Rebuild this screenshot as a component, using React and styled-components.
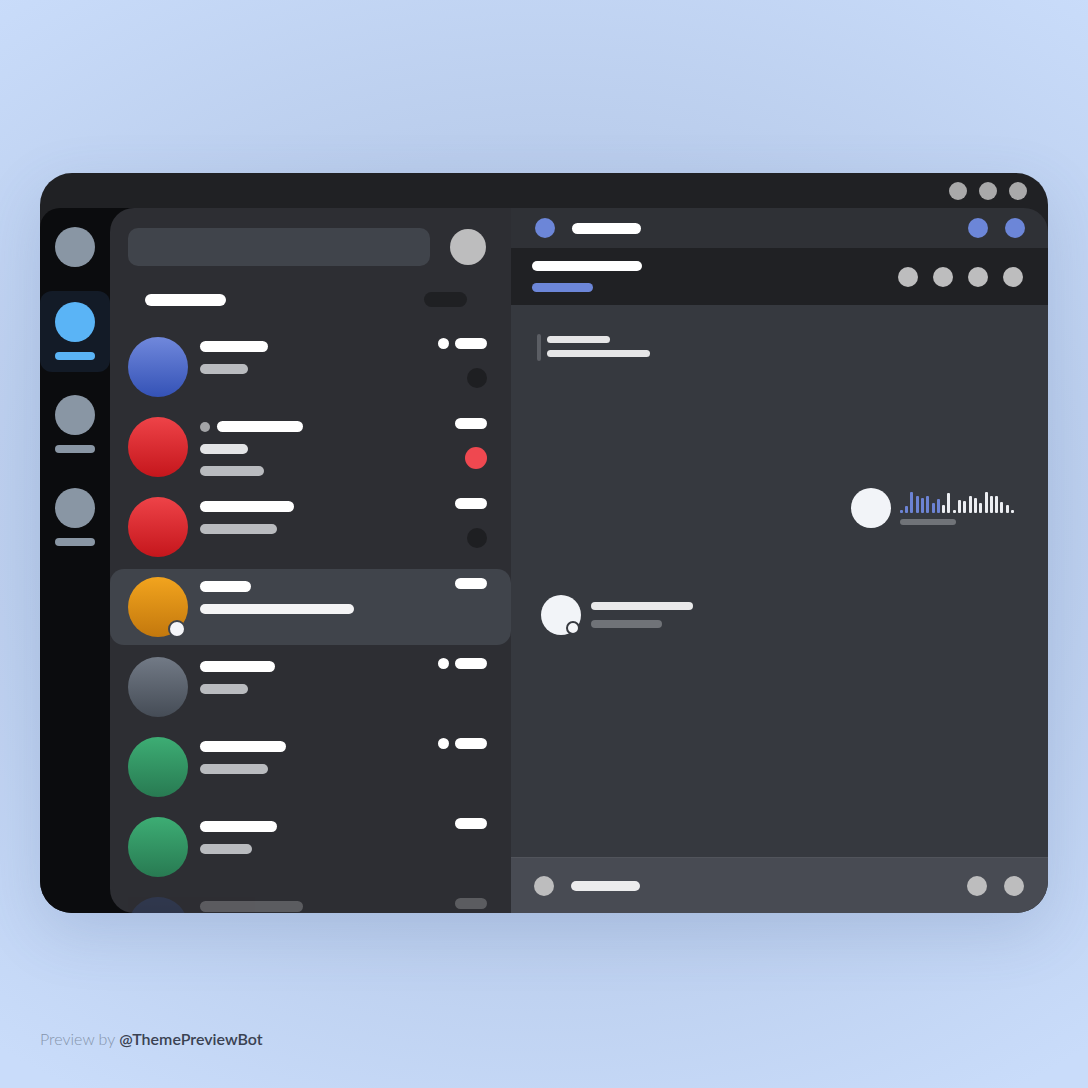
import React from "react";
import styled, { createGlobalStyle } from "styled-components";

const GlobalStyle = createGlobalStyle`
  html, body {
    margin: 0;
    padding: 0;
  }
  body {
    font-family: Lato, "Open Sans", sans-serif;
    background: #c4d8f6;
  }
`;

const Page = styled.div`
  width: 1088px;
  height: 1088px;
  box-sizing: border-box;
  padding: 173px 40px 0;
  overflow: hidden;
  background: radial-gradient(
    ellipse 80% 62% at 50% 48%,
    #b2c4e4 0%,
    #bacdec 55%,
    #c9dcfa 100%
  );
`;

const Window = styled.div`
  height: 740px;
  border-radius: 32px;
  background: #202124;
  overflow: hidden;
  display: flex;
  flex-direction: column;
  box-shadow: 0 20px 60px rgba(70, 100, 150, 0.18);
`;

const TitleBar = styled.div`
  height: 35px;
  flex-shrink: 0;
  display: flex;
  align-items: center;
  justify-content: flex-end;
  gap: 12px;
  padding-right: 21px;
`;

const Dot = styled.span`
  display: block;
  flex-shrink: 0;
  width: ${(p) => p.$size}px;
  height: ${(p) => p.$size}px;
  border-radius: 50%;
  background: ${(p) => p.$color};
`;

const Bar = styled.span`
  display: block;
  flex-shrink: 0;
  width: ${(p) => p.$w}px;
  height: ${(p) => p.$h || 11}px;
  border-radius: 999px;
  background: ${(p) => p.$color || "#ffffff"};
`;

const Body = styled.div`
  flex: 1;
  min-height: 0;
  display: flex;
`;

const Sidebar = styled.div`
  width: 471px;
  flex-shrink: 0;
  display: flex;
  background: #0b0c0e;
  border-top-left-radius: 20px;
`;

const Rail = styled.div`
  width: 70px;
  flex-shrink: 0;
  display: flex;
  flex-direction: column;
  gap: 12px;
  padding-top: 8px;
`;

const RailItem = styled.div`
  display: flex;
  flex-direction: column;
  align-items: center;
  gap: 10px;
  padding: 11px 0 12px;
  border-radius: 12px;
  background: ${(p) => (p.$active ? "#131b27" : "transparent")};
`;

const ListPanel = styled.div`
  width: 401px;
  flex-shrink: 0;
  display: flex;
  flex-direction: column;
  background: #2d2e33;
  border-radius: 24px 0 0 24px;
  overflow: hidden;
`;

const SearchRow = styled.div`
  display: flex;
  align-items: center;
  gap: 20px;
  padding: 20px 25px 0 18px;
`;

const SearchBox = styled.div`
  flex: 1;
  height: 38px;
  border-radius: 10px;
  background: #40444b;
`;

const ListHeader = styled.div`
  height: 16px;
  margin-top: 26px;
  display: flex;
  align-items: center;
  justify-content: space-between;
  padding: 0 44px 0 35px;
`;

const Rows = styled.div`
  margin-top: 20px;
  display: flex;
  flex-direction: column;
`;

const Row = styled.div`
  height: 76px;
  margin: 2px 0;
  box-sizing: border-box;
  flex-shrink: 0;
  display: flex;
  align-items: flex-start;
  padding: 8px 24px 0 18px;
  border-radius: 14px;
  background: ${(p) => (p.$active ? "#40444b" : "transparent")};
  opacity: ${(p) => (p.$faded ? 0.22 : 1)};
`;

const Avatar = styled.div`
  position: relative;
  width: 60px;
  height: 60px;
  flex-shrink: 0;
  border-radius: 50%;
  background: linear-gradient(180deg, ${(p) => p.$from}, ${(p) => p.$to});
`;

const Status = styled.span`
  position: absolute;
  left: ${(p) => p.$left}px;
  top: ${(p) => p.$top}px;
  width: ${(p) => p.$size}px;
  height: ${(p) => p.$size}px;
  border-radius: 50%;
  background: #f4f5f8;
  border: 2px solid ${(p) => p.$ring};
`;

const TextCol = styled.div`
  margin-left: 12px;
  padding-top: 4px;
  display: flex;
  flex-direction: column;
  gap: 12px;
`;

const TitleLine = styled.div`
  display: flex;
  align-items: center;
  gap: 7px;
`;

const MetaCol = styled.div`
  margin-left: auto;
  padding-top: 1px;
  display: flex;
  flex-direction: column;
  align-items: flex-end;
`;

const MetaTop = styled.div`
  display: flex;
  align-items: center;
  gap: 6px;
`;

const BadgeSlot = styled.div`
  height: 24px;
  margin-top: 17px;
  display: flex;
  align-items: center;
`;

const ChatSide = styled.div`
  flex: 1;
  min-width: 0;
  display: flex;
  flex-direction: column;
  border-top-right-radius: 24px;
  overflow: hidden;
`;

const TopBar = styled.div`
  height: 40px;
  flex-shrink: 0;
  display: flex;
  align-items: center;
  gap: 17px;
  padding: 0 23px 0 24px;
  background: #2f3136;
`;

const Group = styled.div`
  margin-left: auto;
  display: flex;
  align-items: center;
  gap: ${(p) => p.$gap}px;
`;

const ChatHeader = styled.div`
  height: 57px;
  flex-shrink: 0;
  box-sizing: border-box;
  display: flex;
  align-items: center;
  padding: 0 25px 0 21px;
  background: #202124;
`;

const HeaderTitles = styled.div`
  display: flex;
  flex-direction: column;
  gap: 12px;
`;

const Messages = styled.div`
  flex: 1;
  display: flex;
  flex-direction: column;
  padding: 29px 34px 0 26px;
  background: #36393f;
`;

const Quote = styled.div`
  display: flex;
  gap: 6px;
`;

const QuoteMark = styled.span`
  width: 4px;
  height: 27px;
  border-radius: 2px;
  background: #5b5e64;
`;

const QuoteLines = styled.div`
  padding-top: 2px;
  display: flex;
  flex-direction: column;
  gap: 7px;
`;

const Voice = styled.div`
  align-self: flex-end;
  margin-top: 127px;
  display: flex;
  align-items: center;
  gap: 9px;
`;

const VoiceBody = styled.div`
  display: flex;
  flex-direction: column;
  gap: 6px;
`;

const Wave = styled.div`
  height: 21px;
  display: flex;
  align-items: flex-end;
  gap: 2.3px;
`;

const WaveBar = styled.span`
  width: 3px;
  height: ${(p) => p.$h}px;
  border-radius: 1px;
  background: ${(p) => (p.$played ? "#6c83d4" : "#eceef2")};
`;

const Incoming = styled.div`
  margin: 67px 0 0 4px;
  display: flex;
  align-items: center;
  gap: 10px;
`;

const Bubble = styled.div`
  position: relative;
  width: 40px;
  height: 40px;
  border-radius: 50%;
  background: #f2f4f8;
`;

const IncomingLines = styled.div`
  display: flex;
  flex-direction: column;
  gap: 10px;
`;

const Composer = styled.div`
  height: 56px;
  flex-shrink: 0;
  box-sizing: border-box;
  display: flex;
  align-items: center;
  gap: 17px;
  padding: 0 24px 0 23px;
  background: #484b53;
  border-top: 1px solid #51545b;
`;

const Footer = styled.div`
  margin-top: 116px;
  font-size: 16px;
  line-height: 20px;
  color: #8594ab;
  font-weight: 300;
`;

const Handle = styled.span`
  color: #3a4252;
  font-weight: 600;
`;

const chats = [
  {
    from: "#7088dc",
    to: "#3452b6",
    title: 68,
    lines: [{ w: 48, c: "#b9bbbf" }],
    dot: true,
    badge: "#1e1f22",
    badgeSize: 20,
  },
  {
    from: "#ee4348",
    to: "#c5161c",
    title: 86,
    muted: true,
    lines: [
      { w: 48, c: "#e3e4e6" },
      { w: 64, c: "#b9bbbf" },
    ],
    badge: "#ef4850",
    badgeSize: 22,
  },
  {
    from: "#ee4348",
    to: "#c5161c",
    title: 94,
    lines: [{ w: 77, c: "#b9bbbf" }],
    badge: "#1e1f22",
    badgeSize: 20,
  },
  {
    from: "#f2a41e",
    to: "#c3780d",
    title: 51,
    lines: [{ w: 154, c: "#f4f4f5" }],
    active: true,
    online: true,
  },
  {
    from: "#727a86",
    to: "#454c56",
    title: 75,
    lines: [{ w: 48, c: "#b9bbbf" }],
    dot: true,
  },
  {
    from: "#3dad74",
    to: "#287a52",
    title: 86,
    lines: [{ w: 68, c: "#b9bbbf" }],
    dot: true,
  },
  {
    from: "#3dad74",
    to: "#287a52",
    title: 77,
    lines: [{ w: 52, c: "#b9bbbf" }],
  },
  {
    from: "#3a5fb0",
    to: "#20386e",
    title: 103,
    lines: [{ w: 60, c: "#b9bbbf" }],
    faded: true,
  },
];

const wave = [3, 7, 21, 17, 15, 17, 10, 14, 8, 20, 3, 13, 12, 17, 15, 10, 21, 17, 17, 11, 8, 3];

function ChatRow({ chat }) {
  return (
    <Row $active={chat.active} $faded={chat.faded}>
      <Avatar $from={chat.from} $to={chat.to}>
        {chat.online && <Status $left={40} $top={43} $size={14} $ring="#40444b" />}
      </Avatar>
      <TextCol>
        <TitleLine>
          {chat.muted && <Dot $size={10} $color="#a3a4a7" />}
          <Bar $w={chat.title} />
        </TitleLine>
        {chat.lines.map((l, i) => (
          <Bar key={i} $w={l.w} $h={10} $color={l.c} />
        ))}
      </TextCol>
      <MetaCol>
        <MetaTop>
          {chat.dot && <Dot $size={11} $color="#ffffff" />}
          <Bar $w={32} />
        </MetaTop>
        {chat.badge && (
          <BadgeSlot>
            <Dot $size={chat.badgeSize} $color={chat.badge} />
          </BadgeSlot>
        )}
      </MetaCol>
    </Row>
  );
}

export default function App() {
  return (
    <Page>
      <GlobalStyle />
      <Window>
        <TitleBar>
          <Dot $size={18} $color="#a9a9aa" />
          <Dot $size={18} $color="#a9a9aa" />
          <Dot $size={18} $color="#a9a9aa" />
        </TitleBar>
        <Body>
          <Sidebar>
            <Rail>
              <RailItem>
                <Dot $size={40} $color="#8996a4" />
              </RailItem>
              <RailItem $active>
                <Dot $size={40} $color="#5ab4f6" />
                <Bar $w={40} $h={8} $color="#5ab4f6" />
              </RailItem>
              <RailItem>
                <Dot $size={40} $color="#8996a4" />
                <Bar $w={40} $h={8} $color="#8996a4" />
              </RailItem>
              <RailItem>
                <Dot $size={40} $color="#8996a4" />
                <Bar $w={40} $h={8} $color="#8996a4" />
              </RailItem>
            </Rail>
            <ListPanel>
              <SearchRow>
                <SearchBox />
                <Dot $size={36} $color="#bdbdbe" />
              </SearchRow>
              <ListHeader>
                <Bar $w={81} $h={12} />
                <Bar $w={43} $h={15} $color="#1f2023" />
              </ListHeader>
              <Rows>
                {chats.map((c, i) => (
                  <ChatRow key={i} chat={c} />
                ))}
              </Rows>
            </ListPanel>
          </Sidebar>
          <ChatSide>
            <TopBar>
              <Dot $size={20} $color="#6c86d8" />
              <Bar $w={69} $h={11} />
              <Group $gap={17}>
                <Dot $size={20} $color="#6c86d8" />
                <Dot $size={20} $color="#6c86d8" />
              </Group>
            </TopBar>
            <ChatHeader>
              <HeaderTitles>
                <Bar $w={110} $h={10} />
                <Bar $w={61} $h={9} $color="#6c86d8" />
              </HeaderTitles>
              <Group $gap={15}>
                <Dot $size={20} $color="#bdbdbe" />
                <Dot $size={20} $color="#bdbdbe" />
                <Dot $size={20} $color="#bdbdbe" />
                <Dot $size={20} $color="#bdbdbe" />
              </Group>
            </ChatHeader>
            <Messages>
              <Quote>
                <QuoteMark />
                <QuoteLines>
                  <Bar $w={63} $h={7} $color="#e6e6e7" />
                  <Bar $w={103} $h={7} $color="#e6e6e7" />
                </QuoteLines>
              </Quote>
              <Voice>
                <Bubble />
                <VoiceBody>
                  <Wave>
                    {wave.map((h, i) => (
                      <WaveBar key={i} $h={h} $played={i < 8} />
                    ))}
                  </Wave>
                  <Bar $w={56} $h={6} $color="#707378" />
                </VoiceBody>
              </Voice>
              <Incoming>
                <Bubble>
                  <Status $left={25} $top={26} $size={10} $ring="#36393f" />
                </Bubble>
                <IncomingLines>
                  <Bar $w={102} $h={8} $color="#e9e9ea" />
                  <Bar $w={71} $h={8} $color="#707378" />
                </IncomingLines>
              </Incoming>
            </Messages>
            <Composer>
              <Dot $size={20} $color="#bdbdbe" />
              <Bar $w={69} $h={10} $color="#ececed" />
              <Group $gap={17}>
                <Dot $size={20} $color="#bdbdbe" />
                <Dot $size={20} $color="#bdbdbe" />
              </Group>
            </Composer>
          </ChatSide>
        </Body>
      </Window>
      <Footer>
        Preview by <Handle>@ThemePreviewBot</Handle>
      </Footer>
    </Page>
  );
}
